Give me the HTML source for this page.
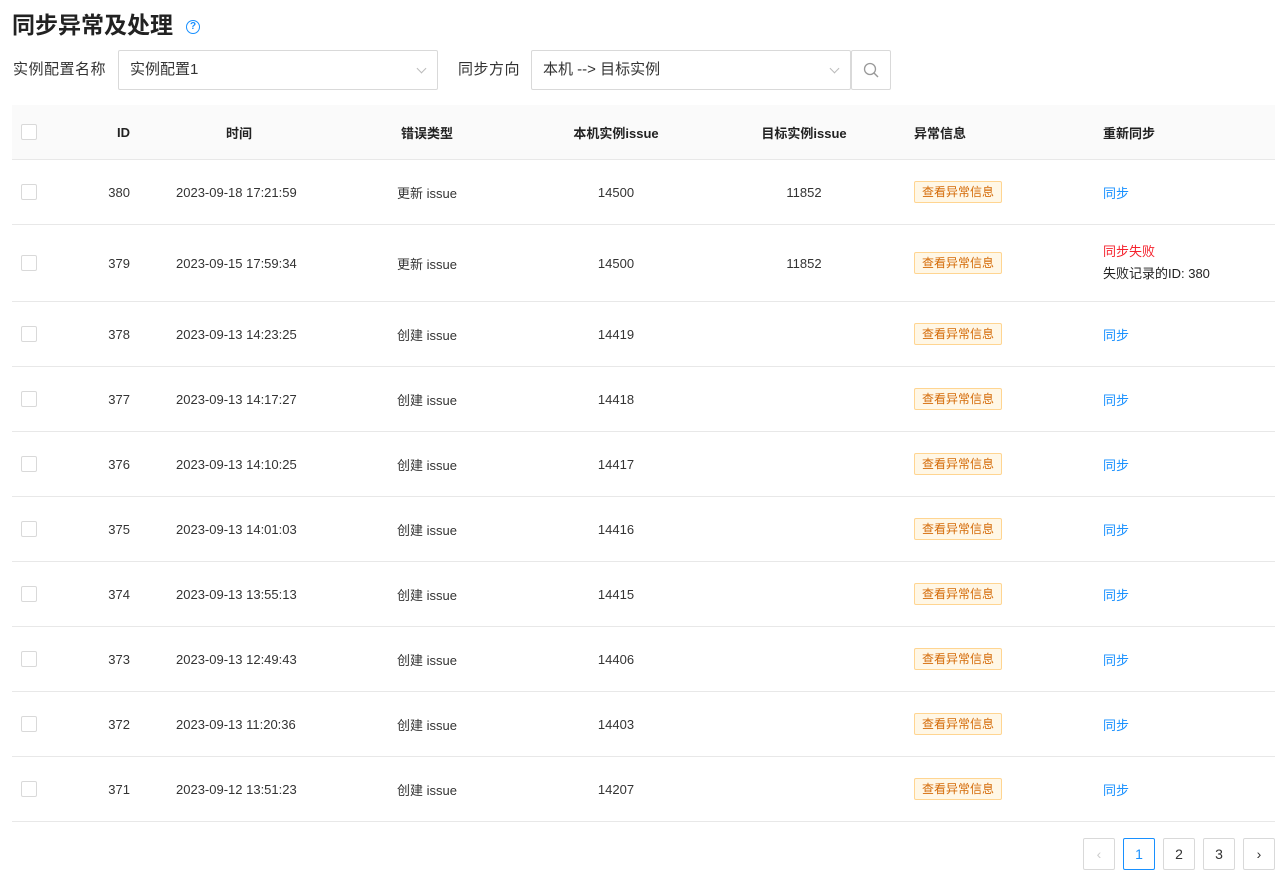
<!DOCTYPE html>
<html><head><meta charset="utf-8"><style>
*{box-sizing:border-box;margin:0;padding:0}
body{width:1282px;height:882px;background:#fff;font-family:"Liberation Sans","Noto Sans CJK SC",sans-serif;color:#333;font-size:13px;position:relative;overflow:hidden}
h1{position:absolute;left:12px;top:9px;font-size:23px;font-weight:bold;color:#222;line-height:32px}
.help{position:absolute;left:186px;top:20px;width:14px;height:14px;border:1.3px solid #1890ff;border-radius:50%;color:#1890ff;font-size:10px;line-height:11px;text-align:center;font-weight:bold}
.lbl{position:absolute;top:60px;font-size:15px;line-height:20px;color:#333;letter-spacing:0.5px}
.sel{position:absolute;top:50px;height:40px;border:1px solid #d9d9d9;border-radius:2px;font-size:15px;line-height:38px;padding-left:11px;color:#333}
.sel .ar{position:absolute;right:12px;top:14px;width:7px;height:7px;border-right:1px solid #bbb;border-bottom:1px solid #bbb;transform:rotate(45deg)}
.srch{position:absolute;left:851px;top:50px;width:40px;height:40px;border:1px solid #d9d9d9;border-radius:2px}
.hdr{position:absolute;left:12px;top:105px;width:1263px;height:55px;background:#fafafa;border-bottom:1px solid #e8e8e8}
.row{position:absolute;left:12px;width:1263px;border-bottom:1px solid #e8e8e8}
.c{position:absolute;top:0;height:100%;display:flex;align-items:center;white-space:nowrap}
.cb{left:9px;width:16px}
.cb i{display:block;width:16px;height:16px;border:1px solid #d9d9d9;border-radius:2px;background:#fff}
.id{left:50px;width:68px;justify-content:flex-end}
.tm{left:164px}
.ty{left:355px;width:120px;justify-content:center}
.lo{left:544px;width:120px;justify-content:center}
.ta{left:732px;width:120px;justify-content:center}
.tg{left:902px}
.tg span{display:inline-block;height:22px;line-height:20px;padding:0 7px;font-size:12px;color:#d46b08;background:#fff7e6;border:1px solid #ffd591;border-radius:2px}
.sy{left:1091px;color:#1890ff}
.hdr .c{font-weight:bold;color:#222}
.pg{position:absolute;top:838px;width:32px;height:32px;border:1px solid #d9d9d9;border-radius:2px;text-align:center;line-height:30px;font-size:14px;color:#333}
</style></head><body>
<h1>同步异常及处理</h1><div class="help">?</div>
<div class="lbl" style="left:13px">实例配置名称</div>
<div class="sel" style="left:118px;width:320px">实例配置1<span class="ar"></span></div>
<div class="lbl" style="left:458px">同步方向</div>
<div class="sel" style="left:531px;width:320px">本机 --&gt; 目标实例<span class="ar"></span></div>
<div class="srch"><svg width="40" height="40" viewBox="0 0 40 40"><circle cx="18" cy="18" r="5.5" fill="none" stroke="#999" stroke-width="1.3"/><line x1="22" y1="22" x2="26" y2="26" stroke="#999" stroke-width="1.4"/></svg></div>

<div class="hdr">
<div class="c cb"><i></i></div>
<div class="c id">ID</div>
<div class="c" style="left:164px;width:126px;justify-content:center">时间</div>
<div class="c ty">错误类型</div>
<div class="c lo">本机实例issue</div>
<div class="c ta">目标实例issue</div>
<div class="c tg">异常信息</div>
<div class="c" style="left:1091px">重新同步</div>
</div>

<div class="row" style="top:160px;height:65px"><div class="c cb"><i></i></div><div class="c id">380</div><div class="c tm">2023-09-18 17:21:59</div><div class="c ty">更新 issue</div><div class="c lo">14500</div><div class="c ta">11852</div><div class="c tg"><span>查看异常信息</span></div><div class="c sy">同步</div></div>
<div class="row" style="top:225px;height:77px"><div class="c cb"><i></i></div><div class="c id">379</div><div class="c tm">2023-09-15 17:59:34</div><div class="c ty">更新 issue</div><div class="c lo">14500</div><div class="c ta">11852</div><div class="c tg"><span>查看异常信息</span></div><div class="c" style="left:1091px;flex-direction:column;align-items:flex-start;justify-content:center;line-height:22px"><div style="color:#f5222d">同步失败</div><div style="color:#222">失败记录的ID: 380</div></div></div>
<div class="row" style="top:302px;height:65px"><div class="c cb"><i></i></div><div class="c id">378</div><div class="c tm">2023-09-13 14:23:25</div><div class="c ty">创建 issue</div><div class="c lo">14419</div><div class="c tg"><span>查看异常信息</span></div><div class="c sy">同步</div></div>
<div class="row" style="top:367px;height:65px"><div class="c cb"><i></i></div><div class="c id">377</div><div class="c tm">2023-09-13 14:17:27</div><div class="c ty">创建 issue</div><div class="c lo">14418</div><div class="c tg"><span>查看异常信息</span></div><div class="c sy">同步</div></div>
<div class="row" style="top:432px;height:65px"><div class="c cb"><i></i></div><div class="c id">376</div><div class="c tm">2023-09-13 14:10:25</div><div class="c ty">创建 issue</div><div class="c lo">14417</div><div class="c tg"><span>查看异常信息</span></div><div class="c sy">同步</div></div>
<div class="row" style="top:497px;height:65px"><div class="c cb"><i></i></div><div class="c id">375</div><div class="c tm">2023-09-13 14:01:03</div><div class="c ty">创建 issue</div><div class="c lo">14416</div><div class="c tg"><span>查看异常信息</span></div><div class="c sy">同步</div></div>
<div class="row" style="top:562px;height:65px"><div class="c cb"><i></i></div><div class="c id">374</div><div class="c tm">2023-09-13 13:55:13</div><div class="c ty">创建 issue</div><div class="c lo">14415</div><div class="c tg"><span>查看异常信息</span></div><div class="c sy">同步</div></div>
<div class="row" style="top:627px;height:65px"><div class="c cb"><i></i></div><div class="c id">373</div><div class="c tm">2023-09-13 12:49:43</div><div class="c ty">创建 issue</div><div class="c lo">14406</div><div class="c tg"><span>查看异常信息</span></div><div class="c sy">同步</div></div>
<div class="row" style="top:692px;height:65px"><div class="c cb"><i></i></div><div class="c id">372</div><div class="c tm">2023-09-13 11:20:36</div><div class="c ty">创建 issue</div><div class="c lo">14403</div><div class="c tg"><span>查看异常信息</span></div><div class="c sy">同步</div></div>
<div class="row" style="top:757px;height:65px"><div class="c cb"><i></i></div><div class="c id">371</div><div class="c tm">2023-09-12 13:51:23</div><div class="c ty">创建 issue</div><div class="c lo">14207</div><div class="c tg"><span>查看异常信息</span></div><div class="c sy">同步</div></div>

<div class="pg" style="left:1083px;color:#ccc">&lsaquo;</div>
<div class="pg" style="left:1123px;border-color:#1890ff;color:#1890ff">1</div>
<div class="pg" style="left:1163px">2</div>
<div class="pg" style="left:1203px">3</div>
<div class="pg" style="left:1243px">&rsaquo;</div>
</body></html>
